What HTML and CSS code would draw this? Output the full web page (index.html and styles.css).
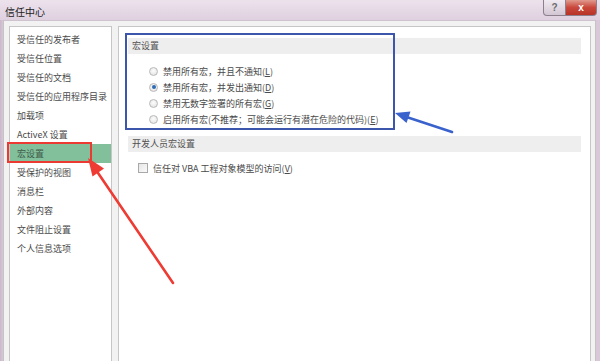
FILE: index.html
```html
<!DOCTYPE html>
<html lang="zh-CN">
<head>
<meta charset="utf-8">
<title>信任中心</title>
<link rel="stylesheet" href="styles.css">
</head>
<body>
<div class="window">
  <div class="titlebar">
    <span class="title">信任中心</span>
    <div class="caption-btns">
      <span class="btn-help">?</span>
      <span class="btn-close">x</span>
    </div>
  </div>
  <div class="client">
    <ul class="nav">
      <li>受信任的发布者</li>
      <li>受信任位置</li>
      <li>受信任的文档</li>
      <li>受信任的应用程序目录</li>
      <li>加载项</li>
      <li>ActiveX 设置</li>
      <li class="active">宏设置</li>
      <li>受保护的视图</li>
      <li>消息栏</li>
      <li>外部内容</li>
      <li>文件阻止设置</li>
      <li>个人信息选项</li>
    </ul>
    <div class="content">
      <div class="band">宏设置</div>
      <div class="radios">
        <div class="row"><span class="radio"></span>禁用所有宏，并且不通知(<u>L</u>)</div>
        <div class="row"><span class="radio on"></span>禁用所有宏，并发出通知(<u>D</u>)</div>
        <div class="row"><span class="radio"></span>禁用无数字签署的所有宏(<u>G</u>)</div>
        <div class="row"><span class="radio"></span>启用所有宏(不推荐；可能会运行有潜在危险的代码)(<u>E</u>)</div>
      </div>
      <div class="band">开发人员宏设置</div>
      <div class="checks">
        <div class="row"><span class="check"></span>信任对 VBA 工程对象模型的访问(<u>V</u>)</div>
      </div>
    </div>
  </div>
  <div class="mark-blue"></div>
  <div class="mark-red"></div>
  <svg class="arrows" width="600" height="361" viewBox="0 0 600 361">
    <line x1="173" y1="283" x2="96" y2="170" stroke="#ee3b33" stroke-width="2.6" stroke-linecap="round"/>
    <polygon points="88,158 104,168.5 92.5,176.5" fill="#ee3b33"/>
    <line x1="452" y1="132" x2="405" y2="116.5" stroke="#3a62cc" stroke-width="2.6" stroke-linecap="round"/>
    <polygon points="395,113 410.5,111.5 406.5,123" fill="#3a62cc"/>
  </svg>
</div>
</body>
</html>
```
FILE: styles.css
```css
* { box-sizing: border-box; }
html, body { margin: 0; padding: 0; }
body {
  width: 600px;
  height: 361px;
  overflow: hidden;
  font-family: "Noto Sans CJK SC", "Liberation Sans", sans-serif;
  font-size: 9px;
  color: #4a4a4a;
  background: #d7c7d7;
}
.window {
  position: relative;
  width: 600px;
  height: 361px;
  display: flex;
  flex-direction: column;
  background: linear-gradient(to right, #cbb7cb 0, #dccddc 4px, #e4d8e4 50%, #d9c8d9 100%);
}
.titlebar {
  height: 20px;
  flex: none;
  display: flex;
  align-items: center;
  justify-content: space-between;
  padding: 0 3px 0 5px;
  background: linear-gradient(to bottom, #ece2ec, #dfd0df);
}
.title {
  font-size: 10px;
  color: #222;
  margin-top: 2px;
}
.caption-btns {
  display: flex;
  align-self: flex-start;
}
.btn-help, .btn-close {
  height: 16px;
  display: flex;
  align-items: center;
  justify-content: center;
  border: 1px solid #8e7f8e;
  border-top: none;
  font-family: "Liberation Sans", sans-serif;
  font-weight: bold;
}
.btn-help {
  width: 23px;
  border-radius: 0 0 0 4px;
  background: linear-gradient(to bottom, #f1eaf1, #d3c6d3);
  color: #6d6d6d;
  font-size: 10px;
}
.btn-close {
  width: 31px;
  border-left: none;
  border-radius: 0 0 4px 0;
  background: linear-gradient(to bottom, #e09a8c, #c9473b 50%, #b83226);
  color: #fff;
  font-size: 10px;
}
.client {
  flex: 1;
  display: flex;
  gap: 6px;
  margin: 0 4px 0 3px;
  padding: 5px 4px 0 5px;
  background: #f2f2f2;
  border-left: 1px solid #c4c4c4;
  border-top: 1px solid #cfc3cf;
  border-right: 1px solid #c4c4c4;
}
.nav {
  list-style: none;
  margin: 0;
  padding: 3px 0 0;
  width: 103px;
  flex: none;
  background: #fff;
  border: 1px solid #c6c6c6;
  border-bottom: none;
}
.nav li {
  height: 19px;
  line-height: 19px;
  padding-left: 7px;
  white-space: nowrap;
}
.nav li.active {
  background: #82c09c;
  color: #3f5a49;
}
.content {
  flex: 1;
  background: #fff;
  border: 1px solid #c6c6c6;
  border-bottom: none;
  padding: 11px 9px 0 9px;
}
.band {
  height: 16px;
  line-height: 16px;
  background: #eeeeee;
  padding-left: 4px;
  color: #505050;
}
.radios {
  padding: 9px 0 9px 21px;
}
.row {
  height: 16px;
  display: flex;
  align-items: center;
  white-space: nowrap;
}
.row u { text-decoration: underline; }
.radio {
  width: 9px;
  height: 9px;
  border-radius: 50%;
  border: 1px solid #b9b9b9;
  background: radial-gradient(circle at 50% 40%, #fdfdfd, #dedede);
  margin-right: 5px;
  flex: none;
  position: relative;
}
.radio.on::after {
  content: "";
  position: absolute;
  left: 1.5px;
  top: 1.5px;
  width: 4px;
  height: 4px;
  border-radius: 50%;
  background: #2f6bb2;
}
.checks {
  padding: 8px 0 0 10px;
}
.check {
  width: 10px;
  height: 10px;
  border: 1px solid #a9a9a9;
  background: linear-gradient(to bottom right, #e6e6e6, #fafafa);
  margin-right: 5px;
  flex: none;
}
.mark-blue {
  position: absolute;
  left: 125px;
  top: 33px;
  width: 270px;
  height: 97px;
  border: 2px solid #3b56aa;
}
.mark-red {
  position: absolute;
  left: 7px;
  top: 142px;
  width: 85px;
  height: 21px;
  border: 2px solid #ea3a32;
}
.arrows {
  position: absolute;
  left: 0;
  top: 0;
}
```
